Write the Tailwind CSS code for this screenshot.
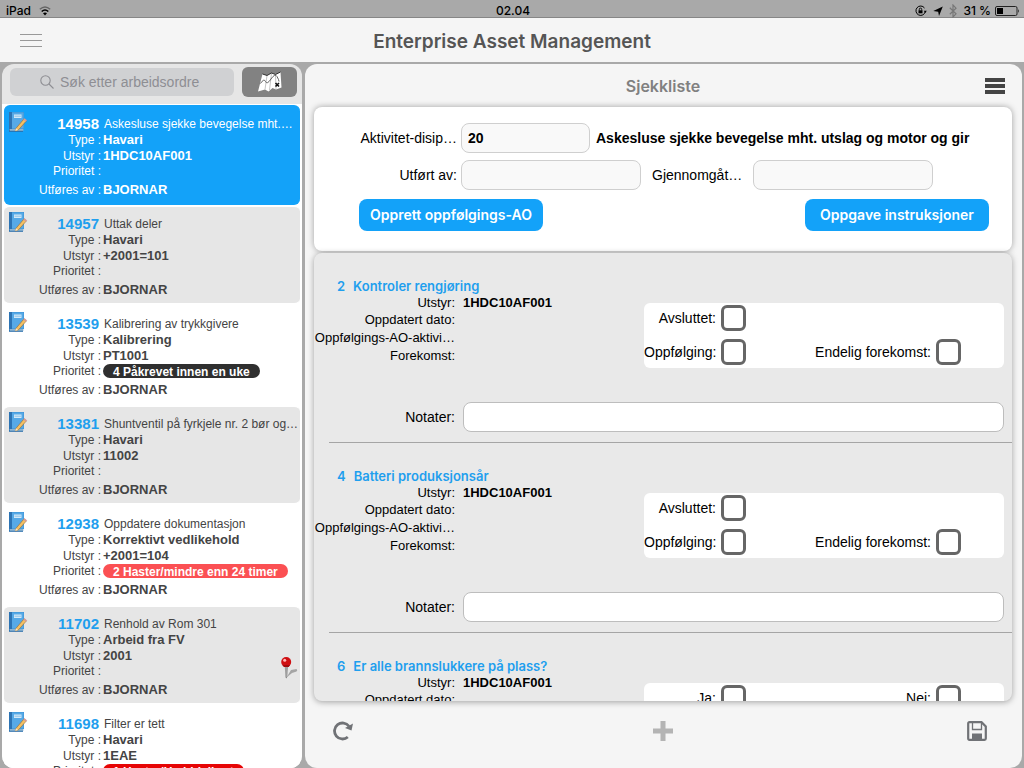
<!DOCTYPE html>
<html lang="no">
<head>
<meta charset="utf-8">
<meta name="viewport" content="width=device-width, initial-scale=1">
<title>Enterprise Asset Management</title>
<script src="https://cdn.jsdelivr.net/npm/@tailwindcss/browser@4"></script>
</head>
<body class="flex h-screen flex-col overflow-hidden bg-[#a9a9a9] font-['Liberation_Sans',Arial,sans-serif] text-black">

<svg class="hidden" aria-hidden="true">
  <symbol id="notebook" viewBox="0 0 20 22">
    <path d="M2 1h14.500v17H2z" fill="#3b92d6"/>
    <path d="M1.500 1h3v19h-3z" fill="#2d74b4"/>
    <path d="M4.500 1.500h11.500v16h-11.500z" fill="#56a9e6"/>
    <path d="M6.500 3.500h7.500v3.500h-7.500z" fill="#d3e9f8"/>
    <path d="M7 5.200h6.500" stroke="#5ba6dc" stroke-width=".6"/>
    <path d="M2 18h13.800v2H2.500z" fill="#8db4d3"/>
    <path d="M1.500 20.300h14" stroke="#2a6dab"/>
    <path d="M8.500 17.300 16.600 7.800l2.400 2-8.200 9.200-2.900 1z" fill="#f4bf62" stroke="#8f6a35" stroke-width=".6"/>
    <path d="m8.500 17.300-.8 2.700 3-.9z" fill="#fbe8c5"/>
    <path d="m15.800 8.800 1.300-1.500 2.300 2-1.300 1.500z" fill="#d79a9a"/>
  </symbol>
  <symbol id="pin" viewBox="0 0 18 24">
    <path d="M6.500 21.500 11 14l5.500-1q1.500 1 0 2.500L12 17z" fill="#8f8f8f" opacity=".75"/>
    <path d="M4.800 10h3L7.200 21l-.9 1.500-.9-1.500z" fill="#808080"/>
    <path d="M6 10v11" stroke="#d9d9d9" stroke-width=".7"/>
    <circle cx="6.200" cy="6" r="5" fill="#cf0f12"/>
    <path d="M2.500 9h7.500l-1.200 2H3.800z" fill="#a30a0d"/>
    <circle cx="4.700" cy="4.200" r="1.500" fill="#ffb9b9"/>
  </symbol>
</svg>

<div class="flex h-[18px] shrink-0 items-center justify-between border-b border-[#868686] pt-1 pr-1 pl-1.5 font-[Inter,sans-serif] text-xs font-medium">
  <div class="flex flex-1 items-center gap-2">
    <span>iPad</span>
    <svg class="h-2.5 w-3" viewBox="0 0 12 10" fill="none" aria-label="Wi-Fi"><path d="M.8 3.300Q6-1.300 11.200 3.300" stroke="#666" stroke-width="1.400"/><path d="M2.700 5.500Q6 2.500 9.300 5.500" stroke="#000" stroke-width="1.600"/><path d="M4 7.300q2-1.700 4 0L6 9.500z" fill="#000"/></svg>
  </div>
  <span>02.04</span>
  <div class="flex flex-1 items-center justify-end gap-1.5">
    <svg class="h-3 w-3" viewBox="0 0 12 12" fill="none" stroke="#000" aria-label="Rotasjonslås"><path d="M10.300 6.500A4.700 4.700 0 1 1 9.500 3"/><path d="M8.800 5.800h3L10.300 8z" fill="#000" stroke="none"/><path d="M3.500 5.300h4v3h-4z" fill="#000" stroke="none"/><path d="M4.300 5.500V4.300a1.200 1.200 0 0 1 2.400 0v1.200" stroke-width=".9"/></svg>
    <svg class="h-3 w-2.5" viewBox="0 0 10 12" aria-label="Posisjon"><path d="M9.800 1.500 6 11 5.200 6.700.3 6z" fill="#000"/></svg>
    <svg class="h-3.5 w-2" viewBox="0 0 8 14" fill="none" stroke="#777" stroke-width="1.200" aria-label="Bluetooth"><path d="m.8 3.800 6.200 6L4 13V1l3 3.200-6.200 6"/></svg>
    <span>31 %</span>
    <svg class="-ml-0.5 h-2.5 w-[25px]" viewBox="0 0 25 10" aria-label="Batteri"><rect x=".5" y=".5" width="21.500" height="9" rx="1.500" fill="none" stroke="#222"/><path d="M2 2h6v6H2z"/><path d="M23.300 3q1.500 2 0 4z"/></svg>
  </div>
</div>

<header class="grid h-11 shrink-0 grid-cols-[1fr_auto_1fr] items-center bg-[#f5f5f5] px-5">
  <button type="button" aria-label="Meny" class="flex h-8 w-[22px] flex-col justify-center gap-[5px]">
    <span class="h-px w-full bg-[#999]"></span><span class="h-px w-full bg-[#999]"></span><span class="h-px w-full bg-[#999]"></span>
  </button>
  <h1 class="pt-1 font-[Inter,sans-serif] text-[19px] font-semibold text-[#555]">Enterprise Asset Management</h1>
  <span></span>
</header>

<div class="flex min-h-0 flex-1 gap-[3px] px-0.5 pt-0.5">

  <aside class="flex w-[300px] shrink-0 flex-col overflow-hidden rounded-xl bg-[#e6e6e6]">
    <div class="flex h-10 shrink-0 items-center gap-2 pr-[5px] pb-1 pl-2">
      <label class="flex h-7 flex-1 items-center gap-1.5 rounded-md bg-[#d0d1d3] pl-[30px]">
        <svg class="h-3.5 w-3.5 shrink-0" viewBox="0 0 14 14" fill="none" stroke="#8e8e93" stroke-width="1.100" aria-hidden="true"><circle cx="5.500" cy="5.500" r="4.700"/><path d="m9 9 4.500 4.500"/></svg>
        <input type="search" aria-label="Søk etter arbeidsordre" placeholder="Søk etter arbeidsordre" class="w-full min-w-0 bg-transparent text-sm outline-none placeholder:text-[#8e8e93]">
      </label>
      <button type="button" aria-label="Kart" class="flex h-[30px] w-[55px] items-center justify-center rounded-md bg-[#828282]">
        <svg class="h-[22px] w-[26px]" viewBox="0 0 26 22" aria-hidden="true"><path d="m5.500 3 4.500 1.500L14.500 2l4 1.500L23.500 1l1 15.500-5.500 2-3.500-1.500-4 3.500-3.500-2L1 20.500z" fill="#fff"/><path d="M10 4.500 8 18.500M14.500 2l-2 17M18.500 3.500l.5 14.500" stroke="#aaa" stroke-width=".7" fill="none"/><path d="M3.500 12.500Q7 7 8.500 10.500T14 8t6-2.500 2 5" stroke="#555" stroke-width=".9" fill="none"/><path d="m18.500 12 3.500 3.500m0-3.500-3.500 3.500" stroke="#111" stroke-width="1.600"/><path d="m5.500 3 4.500 1.500L14.500 2l4 1.500L23.500 1" stroke="#222" fill="none" stroke-width=".9"/></svg>
      </button>
    </div>
    <ul id="orders" class="min-h-0 flex-1 overflow-hidden bg-white px-0.5 pt-px"></ul>
  </aside>

  <main class="flex min-w-0 flex-1 flex-col rounded-xl bg-[#f5f5f5] pr-2.5 pl-[9px]">
    <div class="grid h-[43px] shrink-0 grid-cols-[1fr_auto_1fr] items-center">
      <span></span>
      <h2 class="font-[Inter,sans-serif] text-base font-semibold text-[#808080]">Sjekkliste</h2>
      <button type="button" aria-label="Valg" class="mr-[7px] flex w-5 flex-col gap-0.5 justify-self-end">
        <span class="h-1 w-full bg-[#444]"></span><span class="h-1 w-full bg-[#444]"></span><span class="h-1 w-full bg-[#444]"></span>
      </button>
    </div>

    <form class="flex shrink-0 flex-col gap-[7px] rounded-lg bg-white pt-4 pb-5 text-sm shadow-[0_0_6px_rgba(0,0,0,0.35)]">
      <div class="flex items-center">
        <label for="act" class="w-[143px] text-right">Aktivitet-disip…</label>
        <input id="act" value="20" class="ml-1 h-[30px] w-[129px] rounded-lg border border-[#cfcfcf] bg-[#f9f9f9] px-1.5 font-bold">
        <p class="ml-1.5 min-w-0 flex-1 truncate font-bold">Askesluse sjekke bevegelse mht. utslag og motor og gir</p>
      </div>
      <div class="flex items-center">
        <label for="by" class="w-[143px] text-right">Utført av:</label>
        <input id="by" class="ml-1 h-[30px] w-[180px] rounded-lg border border-[#cfcfcf] bg-[#f9f9f9] px-1.5">
        <label for="rev" class="ml-[11px] w-[101px]">Gjennomgåt…</label>
        <input id="rev" class="h-[30px] w-[180px] rounded-lg border border-[#cfcfcf] bg-[#f9f9f9] px-1.5">
      </div>
      <div class="flex justify-between pt-0.5 pr-[23px] pl-[45px] font-[Inter,sans-serif] text-sm font-semibold text-white">
        <button type="button" class="h-8 w-[184px] rounded-lg bg-[#13a2f9]">Opprett oppfølgings-AO</button>
        <button type="button" class="h-8 w-[184px] rounded-lg bg-[#13a2f9]">Oppgave instruksjoner</button>
      </div>
    </form>

    <div class="mt-0.5 flex min-h-0 flex-1 flex-col rounded-lg bg-[#e9e9e9] shadow-[0_1px_6px_rgba(0,0,0,0.35)]">
      <ul id="checks" class="min-h-0 flex-1 overflow-hidden rounded-lg"></ul>
    </div>

    <footer class="grid h-[67px] shrink-0 grid-cols-[1fr_auto_1fr] items-center pb-2">
      <button type="button" aria-label="Oppdater" class="ml-[19px] justify-self-start"><svg class="h-5 w-5" viewBox="0 0 20 20" fill="none"><path d="M14.800 16A8 8 0 1 1 16 5.300" stroke="#707276" stroke-width="2.800"/><path d="m20 2.500-1.500 7-6.500-2.500z" fill="#707276"/></svg></button>
      <button type="button" aria-label="Legg til"><svg class="h-5 w-5" viewBox="0 0 20 20"><path d="M7.500 0h5v7.500H20v5h-7.500V20h-5v-7.500H0v-5h7.500z" fill="#b4b4b4"/></svg></button>
      <button type="button" aria-label="Lagre" class="mr-[25px] justify-self-end"><svg class="h-5 w-5" viewBox="0 0 20 20" fill="none"><path d="M2.500 1.200h12l4.300 4.300v12q0 1.300-1.300 1.300h-15q-1.300 0-1.300-1.300v-15q0-1.300 1.300-1.300z" stroke="#707276" stroke-width="2.200"/><path d="M5.500 1v7.500h9V1" stroke="#707276" stroke-width="1.300"/><path d="M5 12.500h10V19H5z" fill="#707276"/></svg></button>
    </footer>
  </main>
</div>

<script>
const orders = [
  { no: "14958", title: "Askesluse sjekke bevegelse mht.…", type: "Havari", eq: "1HDC10AF001" },
  { no: "14957", title: "Uttak deler", type: "Havari", eq: "+2001=101" },
  { no: "13539", title: "Kalibrering av trykkgivere", type: "Kalibrering", eq: "PT1001", pri: "4 Påkrevet innen en uke", tone: "bg-[#2f2f2f]" },
  { no: "13381", title: "Shuntventil på fyrkjele nr. 2 bør og…", type: "Havari", eq: "11002" },
  { no: "12938", title: "Oppdatere dokumentasjon", type: "Korrektivt vedlikehold", eq: "+2001=104", pri: "2 Haster/mindre enn 24 timer", tone: "bg-[#fb5053]" },
  { no: "11702", title: "Renhold av Rom 301", type: "Arbeid fra FV", eq: "2001", pin: true },
  { no: "11698", title: "Filter er tett", type: "Havari", eq: "1EAE", pri: "1 Haster/Umiddelbart", tone: "bg-[#e60505]" }
];
const value = "truncate text-[13px] font-bold";
document.getElementById("orders").innerHTML = orders.map((o, i) => {
  const look = i === 0 ? "border-[#13a2f9] bg-[#13a2f9] text-white"
    : i % 2 ? "border-white bg-[#e6e6e6] text-[#444]" : "border-white bg-white text-[#444]";
  return `<li class="relative flex h-[100px] items-start rounded-md border-y-2 pt-2 text-xs ${look}">
    <svg class="-mt-1 ml-[3px] h-[22px] w-[21px] shrink-0" aria-hidden="true"><use href="#notebook"/></svg>
    <dl class="grid min-w-0 flex-1 grid-cols-[73px_1fr] grid-rows-[17px_16px_16px_14px_20px] items-center gap-x-0.5">
      <dt class="pr-0.5 text-right text-[15px] font-bold ${i === 0 ? "text-white" : "text-[#1f9fee]"}">${o.no}</dt><dd class="truncate pl-px">${o.title}</dd>
      <dt class="text-right">Type :</dt><dd class="${value}">${o.type}</dd>
      <dt class="text-right">Utstyr :</dt><dd class="${value}">${o.eq}</dd>
      <dt class="text-right">Prioritet :</dt><dd class="flex">${o.pri ? `<span class="h-3.5 rounded-full px-2.5 text-xs leading-4 font-bold text-white ${o.tone}">${o.pri}</span>` : ""}</dd>
      <dt class="pt-1 text-right">Utføres av :</dt><dd class="pt-1 ${value}">BJORNAR</dd>
    </dl>
    ${o.pin ? `<svg class="absolute top-[49px] right-0.5 h-6 w-[18px]" aria-label="Posisjon"><use href="#pin"/></svg>` : ""}
  </li>`;
}).join("");

const checks = [
  { no: 2, title: "Kontroler rengjøring", boxes: ["Avsluttet:", "", "Oppfølging:", "Endelig forekomst:"] },
  { no: 4, title: "Batteri produksjonsår", boxes: ["Avsluttet:", "", "Oppfølging:", "Endelig forekomst:"] },
  { no: 6, title: "Er alle brannslukkere på plass?", boxes: ["Ja:", "Nei:", "Oppfølging:", "Endelig forekomst:"] }
];
const box = (label, id) => label
  ? `<label for="${id}" class="text-right whitespace-nowrap">${label}</label><input id="${id}" type="checkbox" class="h-[26px] w-[25px] appearance-none rounded-md border-[3px] border-[#666] bg-white">`
  : `<span></span><span></span>`;
document.getElementById("checks").innerHTML = checks.map(c => `<li class="flex h-[190px] flex-col pt-6">
    <h3 class="flex gap-2 pl-[23px] font-[Inter,sans-serif] text-[13px] leading-[18px] font-semibold text-[#1f9fee]"><span>${c.no}</span><span>${c.title}</span></h3>
    <div class="flex items-start justify-between pr-2">
      <dl class="grid grid-cols-[141px_auto] grid-rows-[16px_18px_18px_18px] items-center gap-x-2 text-[13px]">
        <dt class="text-right">Utstyr:</dt><dd class="font-bold">1HDC10AF001</dd>
        <dt class="text-right">Oppdatert dato:</dt><dd></dd>
        <dt class="text-right whitespace-nowrap">Oppfølgings-AO-aktivi…</dt><dd></dd>
        <dt class="text-right">Forekomst:</dt><dd></dd>
      </dl>
      <div class="mt-2 grid h-[65px] w-[360px] grid-cols-[72px_25px_180px_25px] content-center items-center gap-x-[5px] gap-y-2 rounded-md bg-white pb-0.5 text-sm">
        ${c.boxes.map((b, i) => box(b, `c${c.no}-${i}`)).join("")}
      </div>
    </div>
    <div class="mt-[34px] flex items-center gap-2 pr-2 text-sm">
      <label for="note${c.no}" class="w-[141px] text-right">Notater:</label>
      <input id="note${c.no}" class="h-[30px] min-w-0 flex-1 rounded-lg border border-[#bdbdbd] bg-white px-2">
    </div>
    <hr class="mt-auto ml-[15px] border-[#a5a5a5]">
  </li>`).join("");
</script>
</body>
</html>
